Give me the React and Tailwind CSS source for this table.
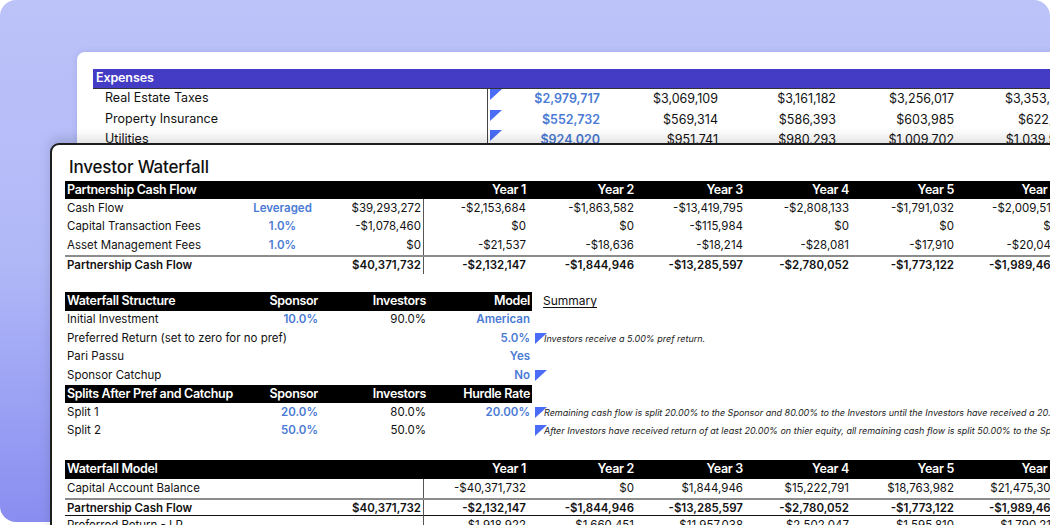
import React from "react";

const BLUE = "text-[#4a7ad4]";
const TOP_COLS = "grid grid-cols-[180px_75px_104px_104px_108px_109px_106px_105px_104px]";
const WS_COLS = "grid grid-cols-[195px_60px_108px_104px] w-[467px] shrink-0";
const BACK_COLS = "grid grid-cols-[395px_114px_118px_118px_118px_118px]";

function Flag() {
  return (
    <svg width="12" height="11" viewBox="0 0 12 11" className="shrink-0">
      <polygon points="0,0 12,0 0,11" fill="#4a6cf6" />
    </svg>
  );
}

const years = ["Year 1", "Year 2", "Year 3", "Year 4", "Year 5", "Year 6"];

const cashRows = [
  { label: "Cash Flow", tag: "Leveraged", total: "$39,293,272", vals: ["-$2,153,684", "-$1,863,582", "-$13,419,795", "-$2,808,133", "-$1,791,032", "-$2,009,512"] },
  { label: "Capital Transaction Fees", tag: "1.0%", total: "-$1,078,460", vals: ["$0", "$0", "-$115,984", "$0", "$0", "$0"] },
  { label: "Asset Management Fees", tag: "1.0%", total: "$0", vals: ["-$21,537", "-$18,636", "-$18,214", "-$28,081", "-$17,910", "-$20,046"] },
];

const pcfVals = ["-$2,132,147", "-$1,844,946", "-$13,285,597", "-$2,780,052", "-$1,773,122", "-$1,989,466"];

const expenses = [
  { label: "Real Estate Taxes", first: "$2,979,717", vals: ["$3,069,109", "$3,161,182", "$3,256,017", "$3,353,697"] },
  { label: "Property Insurance", first: "$552,732", vals: ["$569,314", "$586,393", "$603,985", "$622,105"] },
  { label: "Utilities", first: "$924,020", vals: ["$951,741", "$980,293", "$1,009,702", "$1,039,993"] },
];

function HeaderRow({ title, h = "h-[18px]" }) {
  return (
    <div className={`${TOP_COLS} ${h} items-center bg-black text-white text-[12.5px] font-semibold tracking-[-0.025em]`}>
      <div className="pl-[2px] col-span-3">{title}</div>
      {years.map((y) => (
        <div key={y} className="text-right pr-[2px] whitespace-nowrap">{y}</div>
      ))}
    </div>
  );
}

function DataRow({ label, tag, total, vals, bold, className = "" }) {
  return (
    <div className={`${TOP_COLS} h-[18.5px] items-center ${bold ? "font-semibold" : ""} ${className}`}>
      <div className="pl-[2px] whitespace-nowrap">{label}</div>
      <div className={`text-center font-semibold ${BLUE}`}>{tag}</div>
      <div className="text-right pr-[2px] h-full flex items-center justify-end border-r border-[#555]">{total}</div>
      {vals.map((v, i) => (
        <div key={i} className="text-right pr-[2px] whitespace-nowrap">{v}</div>
      ))}
    </div>
  );
}

function WsRow({ cells, header, note, flag, blue = [] }) {
  return (
    <div className="flex h-[18.5px] items-center">
      <div
        className={`${WS_COLS} h-full items-center ${
          header ? "bg-black text-white text-[12.5px] font-semibold tracking-[-0.025em]" : ""
        }`}
      >
        {cells.map((c, i) => (
          <div
            key={i}
            className={`${i === 0 ? "pl-[2px]" : "text-right pr-[2px]"} whitespace-nowrap ${
              blue.includes(i) ? `${BLUE} font-semibold` : ""
            }`}
          >
            {c}
          </div>
        ))}
      </div>
      <div className="flex items-center pl-[3px] whitespace-nowrap">
        {flag && <Flag />}
        {note && <span className="-ml-[3px] text-[9px] italic text-[#222]">{note}</span>}
      </div>
    </div>
  );
}

export default function App() {
  return (
    <div className="w-[1050px] h-[525px] bg-white relative overflow-hidden font-['Inter','Liberation_Sans',sans-serif]">
      <div className="w-[1050px] h-[522px] rounded-[16px] bg-linear-to-b from-[#bcc3f9] via-[#b1b8f7] to-[#8a8df0]" />

      {/* sheet behind */}
      <div className="absolute left-[77px] top-[52px] w-[1000px] h-[140px] bg-white rounded-tl-[8px] shadow-[0_0_6px_rgba(60,60,140,0.15)] pl-[16px] pt-[17px] text-[12.5px] text-[#111]">
        <div className="h-[20px] bg-[#453cc5] border-b border-[#333] text-white font-semibold pl-[3px] flex items-center tracking-[-0.01em]">
          Expenses
        </div>
        {expenses.map((r) => (
          <div key={r.label} className={`${BACK_COLS} h-[20.5px]`}>
            <div className="pl-[12px] border-r border-[#444] flex items-center pb-[3px]">{r.label}</div>
            <div className="flex justify-between items-start pl-[2px] pr-[2px]">
              <Flag />
              <span className={`${BLUE} font-semibold pt-[1px]`}>{r.first}</span>
            </div>
            {r.vals.map((v, i) => (
              <div key={i} className="text-right pr-[2px] pt-[1px] whitespace-nowrap">{v}</div>
            ))}
          </div>
        ))}
      </div>

      {/* front sheet */}
      <div className="absolute left-[50px] top-[143px] w-[1030px] h-[420px] bg-white border-2 border-[#1d1d1d] rounded-[9px] shadow-[0_-5px_12px_rgba(0,0,0,0.13)] pl-[13px] pt-[11px] text-[11.5px] text-[#111]">
        <div className="ml-[4px] text-[17px] leading-[22px] font-medium tracking-[-0.01em]">Investor Waterfall</div>

        <div className="mt-[3px]">
          <HeaderRow title="Partnership Cash Flow" />
          {cashRows.map((r) => (
            <DataRow key={r.label} {...r} />
          ))}
          <DataRow label="Partnership Cash Flow" total="$40,371,732" vals={pcfVals} bold className="border-t-2 border-[#8c8c8c]" />
        </div>

        <div className="mt-[19px]">
          <div className="flex h-[18.5px] items-center">
            <div className={`${WS_COLS} h-full items-center bg-black text-white text-[12.5px] font-semibold tracking-[-0.025em]`}>
              <div className="pl-[2px]">Waterfall Structure</div>
              <div className="text-right pr-[2px]">Sponsor</div>
              <div className="text-right pr-[2px]">Investors</div>
              <div className="text-right pr-[2px]">Model</div>
            </div>
            <div className="pl-[11px] text-[12px] underline underline-offset-2">Summary</div>
          </div>
          <WsRow cells={["Initial Investment", "10.0%", "90.0%", "American"]} blue={[1, 3]} />
          <WsRow cells={["Preferred Return (set to zero for no pref)", "", "", "5.0%"]} blue={[3]} flag note="Investors receive a 5.00% pref return." />
          <WsRow cells={["Pari Passu", "", "", "Yes"]} blue={[3]} />
          <WsRow cells={["Sponsor Catchup", "", "", "No"]} blue={[3]} flag />
          <WsRow header cells={["Splits After Pref and Catchup", "Sponsor", "Investors", "Hurdle Rate"]} />
          <WsRow
            cells={["Split 1", "20.0%", "80.0%", "20.00%"]}
            blue={[1, 3]}
            flag
            note="Remaining cash flow is split 20.00% to the Sponsor and 80.00% to the Investors until the Investors have received a 20.00% return."
          />
          <WsRow
            cells={["Split 2", "50.0%", "50.0%", ""]}
            blue={[1]}
            flag
            note="After Investors have received return of at least 20.00% on thier equity, all remaining cash flow is split 50.00% to the Sponsor and 50.00% to the Investors."
          />
        </div>

        <div className="mt-[20px]">
          <HeaderRow title="Waterfall Model" h="h-[19px]" />
          <DataRow label="Capital Account Balance" total="" vals={["-$40,371,732", "$0", "$1,844,946", "$15,222,791", "$18,763,982", "$21,475,304"]} />
          <DataRow label="Partnership Cash Flow" total="$40,371,732" vals={pcfVals} bold className="border-t-2 border-b border-t-[#8c8c8c] border-b-[#111]" />
          <DataRow label="Preferred Return - LP" total="" vals={["$1,918,922", "$1,660,451", "$11,957,038", "$2,502,047", "$1,595,810", "$1,790,219"]} />
        </div>
      </div>
    </div>
  );
}
